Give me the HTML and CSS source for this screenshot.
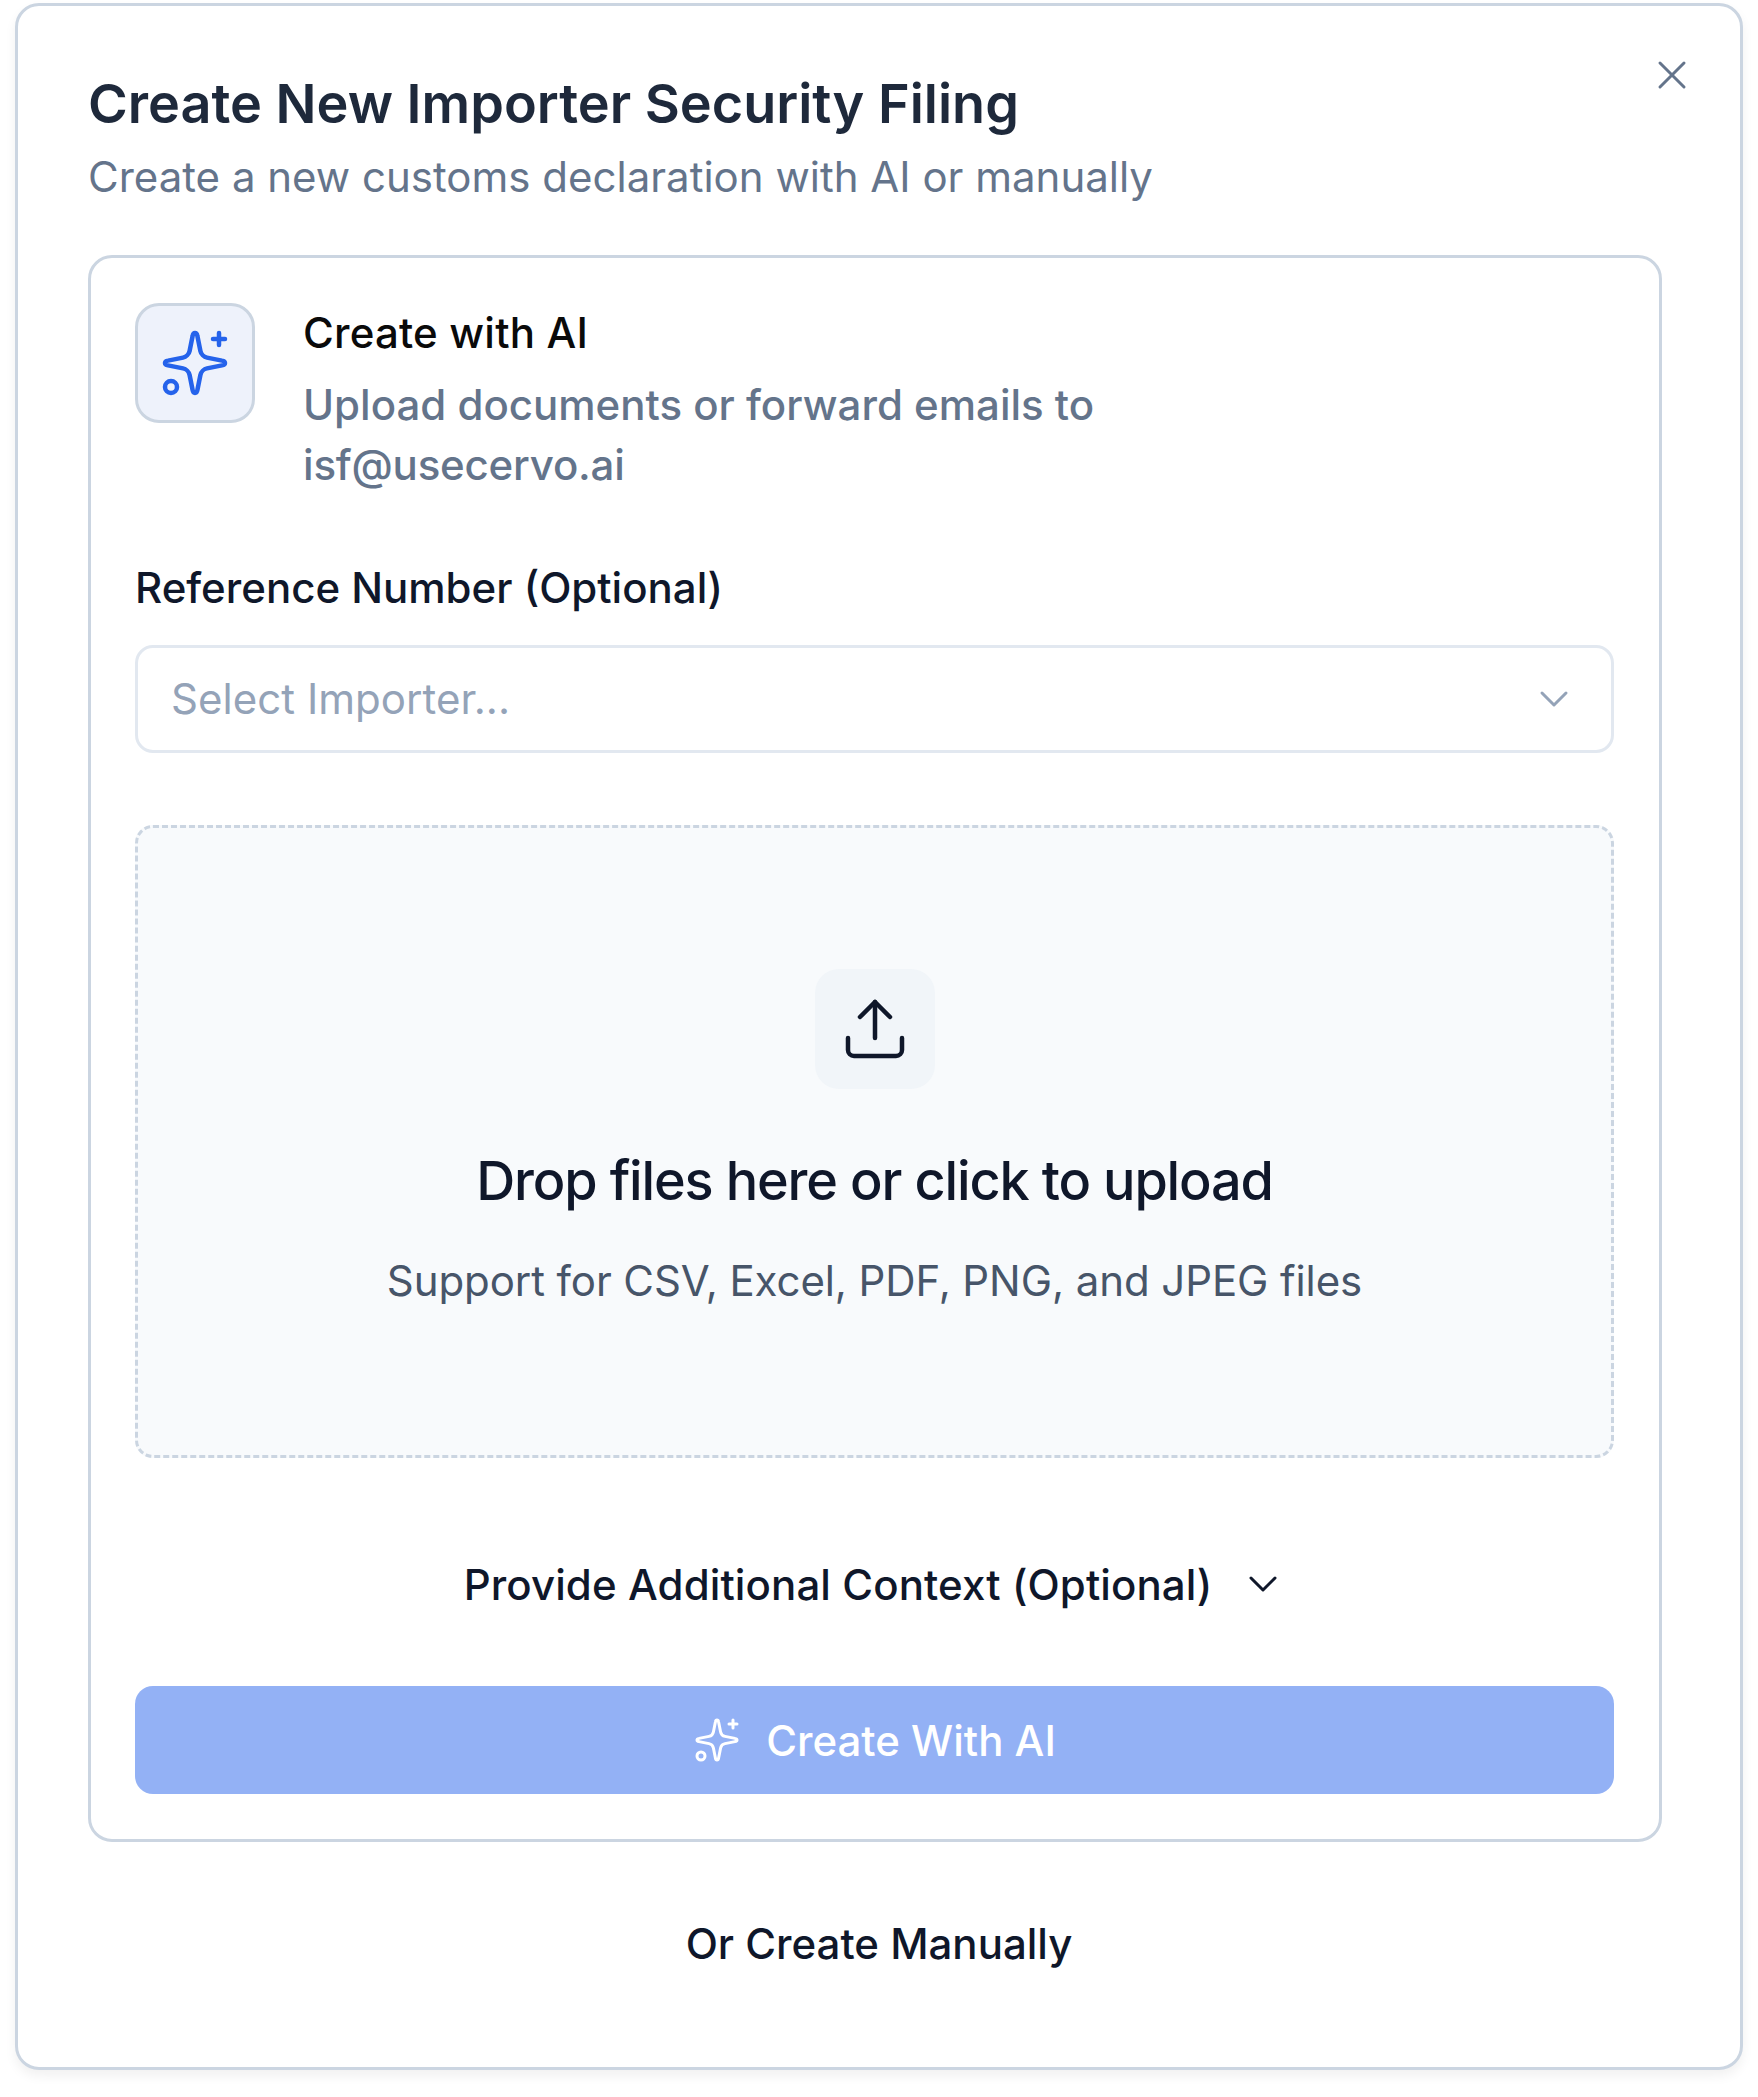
FILE: index.html
```html
<!DOCTYPE html>
<html lang="en">
<head>
<meta charset="utf-8">
<title>Create New Importer Security Filing</title>
<link rel="stylesheet" href="styles.css">
</head>
<body>
<div class="modal">
  <button class="close" type="button" aria-label="Close">
    <svg class="icon-48" viewBox="0 0 24 24"><path d="M18 6 6 18"/><path d="m6 6 12 12"/></svg>
  </button>
  <h1 class="title">Create New Importer Security Filing</h1>
  <p class="subtitle">Create a new customs declaration with AI or manually</p>
  <section class="card">
    <div class="card-head">
      <div class="ai-tile">
        <svg class="icon-72 blue" viewBox="0 0 24 24"><path d="M11.2 3C11.3 2.4 11.5 2 12 2C12.5 2 12.7 2.4 12.8 3L13.8 8C14 9 15 10 16 10.2L21 11.2C21.6 11.3 22 11.5 22 12C22 12.5 21.6 12.7 21 12.8L16 13.8C15 14 14 15 13.8 16L12.8 21C12.7 21.6 12.5 22 12 22C11.5 22 11.3 21.6 11.2 21L10.2 16C10 15 9 14 8 13.8L3 12.8C2.4 12.7 2 12.5 2 12C2 11.5 2.4 11.3 3 11.2L8 10.2C9 10 10 9 10.2 8Z"/><path d="M20 2v4"/><path d="M22 4h-4"/><circle cx="4" cy="20" r="2"/></svg>
      </div>
      <div class="head-text">
        <h2 class="card-title">Create with AI</h2>
        <p class="card-desc">Upload documents or forward emails to<br><span class="email">isf@usecervo.ai</span></p>
      </div>
    </div>
    <label class="field-label">Reference Number (Optional)</label>
    <div class="select">
      <span class="placeholder">Select Importer...</span>
      <svg class="icon-48 muted" viewBox="0 0 24 24"><path d="m6 9 6 6 6-6"/></svg>
    </div>
    <div class="dropzone">
      <div class="upload-tile">
        <svg class="icon-72 dark" viewBox="0 0 24 24"><path d="M12 3v12"/><path d="m17 8-5-5-5 5"/><path d="M21 15v4a2 2 0 0 1-2 2H5a2 2 0 0 1-2-2v-4"/></svg>
      </div>
      <div class="drop-title">Drop files here or click to upload</div>
      <div class="drop-sub">Support for CSV, Excel, PDF, PNG, and JPEG files</div>
    </div>
    <div class="context">
      <span>Provide Additional Context (Optional)</span>
      <svg class="icon-48 dark" viewBox="0 0 24 24"><path d="m6 9 6 6 6-6"/></svg>
    </div>
    <button class="submit" type="button">
      <svg class="icon-48 white" viewBox="0 0 24 24"><path d="M11.2 3C11.3 2.4 11.5 2 12 2C12.5 2 12.7 2.4 12.8 3L13.8 8C14 9 15 10 16 10.2L21 11.2C21.6 11.3 22 11.5 22 12C22 12.5 21.6 12.7 21 12.8L16 13.8C15 14 14 15 13.8 16L12.8 21C12.7 21.6 12.5 22 12 22C11.5 22 11.3 21.6 11.2 21L10.2 16C10 15 9 14 8 13.8L3 12.8C2.4 12.7 2 12.5 2 12C2 11.5 2.4 11.3 3 11.2L8 10.2C9 10 10 9 10.2 8Z"/><path d="M20 2v4"/><path d="M22 4h-4"/><circle cx="4" cy="20" r="2"/></svg>
      <span>Create With AI</span>
    </button>
  </section>
  <div class="manual">Or Create Manually</div>
</div>
</body>
</html>
```
FILE: styles.css
```css
* { box-sizing: border-box; }
html, body { margin: 0; background: #fff; }
body {
  padding: 3px 15px 0;
  width: 1758px;
  height: 2097px;
  overflow: hidden;
  font-family: Inter, "Liberation Sans", sans-serif;
}
.modal {
  position: relative;
  width: 1728px;
  height: 2067px;
  padding: 68px 78px 0 70px;
  background: #fff;
  border: 3px solid #cbd5e1;
  border-radius: 24px;
  box-shadow: 0 6px 12px rgba(0, 0, 0, 0.06);
}
svg { display: block; flex: none; fill: none; stroke: currentColor; stroke-linecap: round; stroke-linejoin: round; stroke-width: 1.5; }
.icon-48 { width: 48px; height: 48px; }
.icon-72 { width: 72px; height: 72px; }
.blue { color: #2563eb; }
.muted { color: #94a3b8; }
.dark { color: #0f172a; }
.white { color: #fff; }
.close {
  position: absolute;
  top: 45px;
  right: 44px;
  padding: 0;
  border: 0;
  background: none;
  color: #64748b;
}
.title {
  margin: 0;
  font-size: 54px;
  line-height: 60px;
  font-weight: 600;
  color: #1e293b;
}
.subtitle {
  margin: 16px 0 51px;
  font-size: 42px;
  line-height: 54px;
  color: #64748b;
}
.card {
  width: 1574px;
  padding: 45px 45px 45px 44px;
  border: 3px solid #cbd5e1;
  border-radius: 24px;
}
.card-head { display: flex; gap: 48px; }
.ai-tile {
  display: flex;
  align-items: center;
  justify-content: center;
  width: 120px;
  height: 120px;
  background: #eef2fb;
  border: 3px solid #cbd5e1;
  border-radius: 24px;
}
.card-title {
  margin: 0 0 12px;
  font-size: 42px;
  line-height: 60px;
  font-weight: 500;
  letter-spacing: 0.2px;
  color: #0a0a0a;
}
.card-desc {
  margin: 0;
  font-size: 42px;
  line-height: 60px;
  font-weight: 500;
  color: #64748b;
}
.email { letter-spacing: -0.2px; }
.field-label {
  display: block;
  margin-top: 63px;
  font-size: 42px;
  line-height: 60px;
  font-weight: 500;
  color: #0f172a;
}
.select {
  display: flex;
  align-items: center;
  justify-content: space-between;
  height: 108px;
  margin-top: 27px;
  padding: 0 33px;
  border: 3px solid #e2e8f0;
  border-radius: 18px;
}
.placeholder { font-size: 42px; line-height: 54px; color: #94a3b8; letter-spacing: 0.04px; }
.dropzone {
  display: flex;
  flex-direction: column;
  align-items: center;
  height: 633px;
  margin-top: 72px;
  padding-top: 141px;
  background: #f8fafc;
  border: 3px dashed #cbd5e1;
  border-radius: 18px;
}
.upload-tile {
  display: flex;
  align-items: center;
  justify-content: center;
  width: 120px;
  height: 120px;
  background: #f1f5f9;
  border-radius: 24px;
}
.drop-title {
  margin-top: 56px;
  font-size: 54px;
  line-height: 72px;
  font-weight: 500;
  letter-spacing: -1.16px;
  color: #0f172a;
}
.drop-sub {
  margin-top: 37px;
  font-size: 42px;
  line-height: 54px;
  letter-spacing: -0.085px;
  color: #475569;
}
.context {
  display: flex;
  align-items: center;
  justify-content: center;
  gap: 27px;
  height: 60px;
  margin-top: 96px;
  padding-left: 2px;
  font-size: 42px;
  font-weight: 500;
  letter-spacing: 0.11px;
  color: #0f172a;
}
.submit {
  display: flex;
  align-items: center;
  justify-content: center;
  gap: 25px;
  width: 100%;
  height: 108px;
  margin-top: 72px;
  padding: 0;
  border: 0;
  border-radius: 18px;
  background: #93b1f5;
  color: #fff;
  font: 500 42px Inter, "Liberation Sans", sans-serif;
}
.manual {
  margin: 72px -78px 0 -70px;
  font-size: 42px;
  line-height: 60px;
  font-weight: 500;
  text-align: center;
  color: #0f172a;
}
```
